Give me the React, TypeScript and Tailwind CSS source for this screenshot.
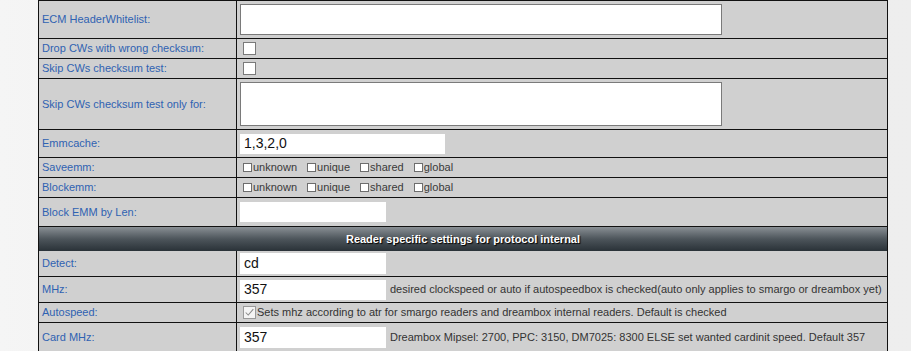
import React from 'react';

type RowProps = {
    label: string;
    h: string;
    children?: React.ReactNode;
};

const Row: React.FC<RowProps> = ({ label, h, children }) => {
    return (
        <div className={`flex border-b border-[#111] bg-[#d0d0d0] ${h}`}>
            <div className="w-[198px] shrink-0 flex items-center pl-[3px] text-[11px] text-[#2f62b2] border-r border-[#111]">
                {label}
            </div>
            <div className="flex-1 flex items-center min-w-0">{children}</div>
        </div>
    );
};

const Box: React.FC = () => (
    <span className="inline-block w-[13px] h-[13px] ml-[6px] bg-white border border-[#7a7a7a]" />
);

const SmallCheck: React.FC<{ text: string }> = ({ text }) => (
    <span className="flex items-center mr-[10px]">
        <span className="inline-block w-[9px] h-[9px] bg-white border border-[#6d6d6d] mr-px" />
        <span>{text}</span>
    </span>
);

const CheckGroup: React.FC = () => (
    <div className="flex items-center pl-[6px] text-[11px] text-[#3a3a3a]">
        <SmallCheck text="unknown" />
        <SmallCheck text="unique" />
        <SmallCheck text="shared" />
        <SmallCheck text="global" />
    </div>
);

const Field: React.FC<{ value?: string; w: string; h: string }> = ({ value, w, h }) => (
    <div className={`ml-[3px] bg-white flex items-center pl-[4px] text-[14px] text-[#111] ${w} ${h}`}>
        {value}
    </div>
);

const Note: React.FC<{ text: string }> = ({ text }) => (
    <span className="ml-[4px] text-[11px] text-[#333] whitespace-nowrap">{text}</span>
);

export default function App() {
    return (
        <div className="w-[911px] h-[351px] overflow-hidden bg-linear-to-r from-[#f5f5f5] via-[#ececec] to-[#eeeeee] font-['Liberation_Sans',Arial,sans-serif]">
            <div className="ml-[38px] w-[850px] border-t border-l border-r border-[#111]">
                <Row label="ECM HeaderWhitelist:" h="h-[38px]">
                    <div className="ml-[3px] w-[482px] h-[31px] bg-white border border-[#7a7a7a]" />
                </Row>
                <Row label="Drop CWs with wrong checksum:" h="h-[20px]">
                    <Box />
                </Row>
                <Row label="Skip CWs checksum test:" h="h-[20px]">
                    <Box />
                </Row>
                <Row label="Skip CWs checksum test only for:" h="h-[51px]">
                    <div className="ml-[3px] w-[482px] h-[44px] bg-white border border-[#7a7a7a]" />
                </Row>
                <Row label="Emmcache:" h="h-[28px]">
                    <Field value="1,3,2,0" w="w-[205px]" h="h-[20px]" />
                </Row>
                <Row label="Saveemm:" h="h-[20px]">
                    <CheckGroup />
                </Row>
                <Row label="Blockemm:" h="h-[20px]">
                    <CheckGroup />
                </Row>
                <Row label="Block EMM by Len:" h="h-[29px]">
                    <Field w="w-[146px]" h="h-[20px]" />
                </Row>
                <div className="h-[24px] flex items-center justify-center bg-linear-to-b from-[#8a9095] via-[#4d555b] to-[#2a3238] text-white font-bold text-[11px] [text-shadow:1px_1px_1px_#000]">
                    Reader specific settings for protocol internal
                </div>
                <Row label="Detect:" h="h-[26px]">
                    <Field value="cd" w="w-[146px]" h="h-[21px]" />
                </Row>
                <Row label="MHz:" h="h-[26px]">
                    <Field value="357" w="w-[146px]" h="h-[20px]" />
                    <Note text="desired clockspeed or auto if autospeedbox is checked(auto only applies to smargo or dreambox yet)" />
                </Row>
                <Row label="Autospeed:" h="h-[20px]">
                    <span className="ml-[6px] w-[13px] h-[13px] bg-[#f4f4f4] border border-[#9a9a9a] flex items-center justify-center">
                        <svg viewBox="0 0 13 13" className="w-[11px] h-[11px]">
                            <path d="M2 6.5 L5 9.5 L11 2.5" fill="none" stroke="#8a8a8a" strokeWidth="1.2" />
                        </svg>
                    </span>
                    <span className="ml-px text-[11px] text-[#333] whitespace-nowrap">
                        Sets mhz according to atr for smargo readers and dreambox internal readers. Default is checked
                    </span>
                </Row>
                <Row label="Card MHz:" h="h-[30px]">
                    <div className="self-start mt-[4px] flex items-center">
                        <Field value="357" w="w-[146px]" h="h-[21px]" />
                        <Note text="Dreambox Mipsel: 2700, PPC: 3150, DM7025: 8300 ELSE set wanted cardinit speed. Default 357" />
                    </div>
                </Row>
            </div>
        </div>
    );
}
